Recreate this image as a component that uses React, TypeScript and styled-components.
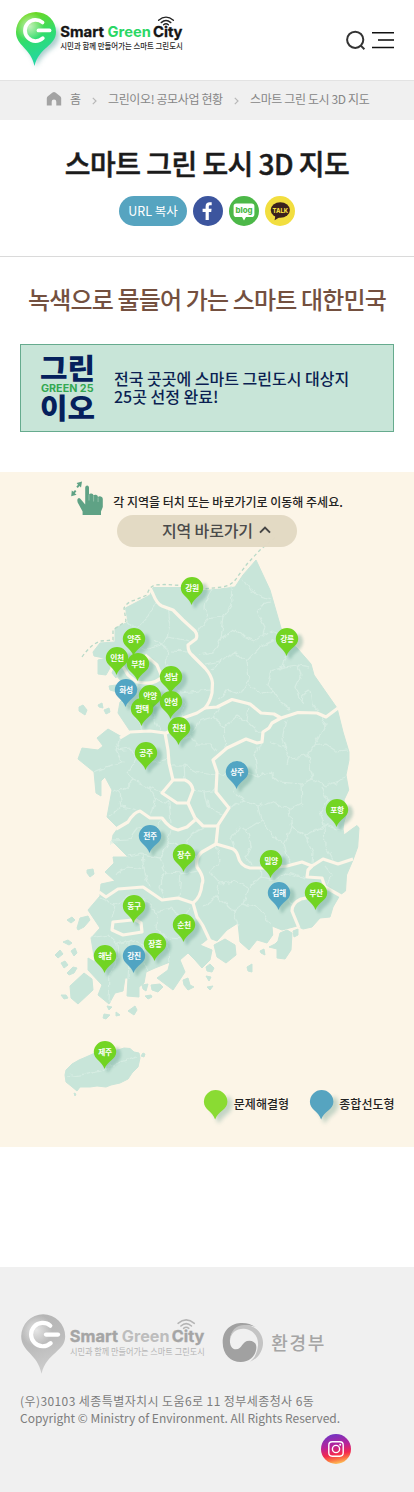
import React from 'react';
import styled, { createGlobalStyle } from 'styled-components';

const GlobalStyle = createGlobalStyle`
  * { box-sizing: border-box; }
  body { margin: 0; background: #fff; font-family: 'Noto Sans CJK KR', 'Noto Sans', sans-serif; color: #222; }
  button { font: inherit; border: 0; padding: 0; background: none; color: inherit; }
  h1, h2, p { margin: 0; }
  svg { display: block; overflow: visible; }
`;

const Page = styled.div`
  width: 414px;
  height: 1492px;
  display: flex;
  flex-direction: column;
  overflow: hidden;
`;

const Header = styled.header`
  height: 81px;
  flex: none;
  display: flex;
  align-items: flex-start;
  justify-content: space-between;
  padding: 9px 20px 0 14px;
  border-bottom: 1px solid #e3e3e3;
`;

const Tools = styled.div`
  display: flex;
  gap: 6px;
  padding-top: 21px;
`;

const Breadcrumb = styled.nav`
  height: 39px;
  flex: none;
  display: flex;
  align-items: center;
  padding: 0 0 4px 46px;
  background: #f0f0f0;
  color: #868686;
  font-size: 12px;
  line-height: 18px;
`;

const Crumb = styled.span<{ $w: number; $ls?: number }>`
  width: ${p => p.$w}px;
  letter-spacing: ${p => p.$ls ?? -0.38}px;
  white-space: nowrap;
`;

const Hero = styled.section`
  height: 137px;
  flex: none;
  display: flex;
  flex-direction: column;
  align-items: center;
  border-bottom: 1px solid #dadada;
`;

const Title = styled.h1`
  margin-top: 23px;
  height: 53px;
  font-size: 28px;
  font-weight: 500;
  line-height: 40px;
  letter-spacing: -0.55px;
  color: #1b1b1b;
  -webkit-text-stroke: 0.5px #1b1b1b;
  white-space: nowrap;
`;

const ShareRow = styled.div`
  display: flex;
  gap: 6px;
`;

const CopyButton = styled.button`
  width: 68px;
  height: 30px;
  border-radius: 15px;
  background: #56a4c0;
  color: #fff;
  font-size: 12.5px;
  line-height: 30px;
`;

const Intro = styled.section`
  height: 215px;
  flex: none;
  padding: 0 20px;
  display: flex;
  flex-direction: column;
`;

const Subtitle = styled.h2`
  margin-top: 24px;
  height: 63px;
  font-size: 24px;
  font-weight: 500;
  line-height: 36px;
  letter-spacing: -0.85px;
  text-align: center;
  color: #74503f;
  white-space: nowrap;
`;

const NoticeCard = styled.div`
  height: 88px;
  display: flex;
  align-items: center;
  gap: 18px;
  padding-left: 20px;
  border: 1px solid #66ab8e;
  background: #c8e5d8;
`;

const NoticeText = styled.p`
  padding-bottom: 2px;
  font-size: 16px;
  font-weight: 500;
  line-height: 18px;
  color: #0b1f52;
`;

const MapSection = styled.section`
  height: 675px;
  flex: none;
  display: flex;
  flex-direction: column;
  align-items: center;
  background: #fcf5e7;
`;

const Hint = styled.div`
  height: 43px;
  display: flex;
  align-items: flex-end;
  gap: 10px;
  font-size: 12px;
  font-weight: 500;
  line-height: 18px;
  color: #222;
  white-space: nowrap;
  span { padding-bottom: 4px; }
`;

const JumpButton = styled.button`
  position: relative;
  z-index: 2;
  width: 180px;
  height: 32px;
  flex: none;
  display: flex;
  align-items: center;
  gap: 6px;
  padding: 0 0 2px 45px;
  border-radius: 16px;
  background: rgba(226, 217, 195, 0.96);
  color: #4a4a4a;
  font-size: 16px;
  font-weight: 500;
  line-height: 30px;
  letter-spacing: -0.15px;
`;

const MapCanvas = styled.div`
  position: relative;
  width: 414px;
  height: 617px;
  margin-top: -17px;
`;

const Pin = styled.button`
  position: absolute;
  width: 36px;
  height: 40px;
`;

const Legend = styled.div`
  position: absolute;
  left: 202px;
  top: 558px;
  display: flex;
`;

const LegendItem = styled.div<{ $w: number }>`
  width: ${p => p.$w}px;
  display: flex;
  font-size: 12px;
  font-weight: 500;
  line-height: 31px;
  color: #222;
  white-space: nowrap;
  svg { flex: none; margin-right: -6px; }
`;

const Footer = styled.footer`
  margin-top: 120px;
  height: 225px;
  flex: none;
  background: #f0f0f0;
  padding: 44px 20px 0 19px;
`;

const FooterLogos = styled.div`
  display: flex;
  height: 81px;
  gap: 11.8px;
`;

const MinistrySlot = styled.div`
  padding-top: 9px;
`;

const FooterLine = styled.p<{ $ls: number }>`
  padding-left: 1px;
  font-size: 12px;
  line-height: 17px;
  letter-spacing: ${p => p.$ls}px;
  color: #7d7d7d;
  white-space: nowrap;
`;

const SocialRow = styled.div`
  display: flex;
  padding: 8px 0 0 302px;
`;

const FONT = "'Noto Sans CJK KR', sans-serif";
const LATIN = "Inter, 'Liberation Sans', sans-serif";

function Brand({ mono, scale = 1 }: { mono?: boolean; scale?: number }) {
  const id = mono ? 'mono' : 'color';
  const dark = mono ? '#a5a5a5' : '#151515';
  return (
    <svg width={172 * scale} height={64 * scale} viewBox="14 9 172 64">
      <defs>
        <linearGradient id={`pin-${id}`} x1="0.3" y1="0" x2="0.6" y2="1">
          <stop offset="0.05" stopColor={mono ? '#b5b5b5' : '#6cd922'} />
          <stop offset="0.5" stopColor={mono ? '#bcbcbc' : '#2fdc70'} />
          <stop offset="1" stopColor={mono ? '#cfcfcf' : '#1fd6ae'} />
        </linearGradient>
        <radialGradient id={`shine-${id}`} cx="0.34" cy="0.36" r="0.36">
          <stop offset="0" stopColor="#fff" stopOpacity="0.65" />
          <stop offset="1" stopColor="#fff" stopOpacity="0" />
        </radialGradient>
        <filter id={`soft-${id}`} x="-40%" y="-40%" width="200%" height="200%">
          <feGaussianBlur stdDeviation="2.4" />
        </filter>
      </defs>
      {!mono && (
        <path d="M23 45 Q35 56 36 67 Q40 56 55 46 Q61 40 59 30 L40 20 Z" fill="#5b9e9e" opacity="0.5" filter="url(#soft-color)" />
      )}
      <path d="M36 12 A20 20 0 0 1 56 32 C56 46 39 47 34.5 66 C31 48 16 46 16 32 A20 20 0 0 1 36 12Z" fill={`url(#pin-${id})`} />
      <circle cx="36" cy="32" r="20" fill={`url(#shine-${id})`} />
      <path d="M42.5 22.4 A10.6 10.6 0 1 0 42.8 38.2" fill="none" stroke="#fff" strokeWidth="3.8" strokeLinecap="round" />
      <path d="M38.5 30.4 H49.5" stroke="#fff" strokeWidth="3.8" strokeLinecap="round" />
      <g fontFamily={LATIN} fontWeight="700" fontSize="14.5">
        <text x="60.2" y="37.4" textLength="43.8" lengthAdjust="spacingAndGlyphs" fill={dark} stroke={dark} strokeWidth="0.3">Smart</text>
        <text x="107.5" y="37.4" textLength="43.3" lengthAdjust="spacingAndGlyphs" fill={mono ? '#bdbdbd' : '#2bd765'}>Green</text>
        <text x="153" y="37.4" textLength="29.5" lengthAdjust="spacingAndGlyphs" fill={dark} stroke={dark} strokeWidth="0.3">City</text>
      </g>
      <g fill="none" stroke={mono ? '#b5b5b5' : '#222'} strokeWidth="1.4" strokeLinecap="round">
        <path d="M158.6 20.2 Q166 14 173.4 20.2" />
        <path d="M161.2 22.6 Q166 18.4 170.8 22.6" />
        <path d="M163.6 24.8 Q166 22.8 168.4 24.8" />
      </g>
      <text x="60.3" y="49.4" fontFamily={FONT} fontWeight={mono ? 400 : 500} fontSize="8.4" textLength="122.5" lengthAdjust="spacingAndGlyphs" fill={mono ? '#b5b5b5' : '#2a2a2a'}>시민과 함께 만들어가는 스마트 그린도시</text>
    </svg>
  );
}

const SearchIcon = () => (
  <svg width="20" height="20" viewBox="0 0 20 20" fill="none" stroke="#333" strokeWidth="2">
    <circle cx="9.2" cy="9.8" r="8.1" />
    <path d="M14.8 15.6 L18.4 19.2" />
  </svg>
);

const MenuIcon = () => (
  <svg width="22" height="20" viewBox="0 0 22 20">
    <path d="M0 2.8H22M0 17.6H22" stroke="#111" strokeWidth="1.5" />
    <path d="M6 10H22" stroke="#444" strokeWidth="2" />
  </svg>
);

const HomeIcon = () => (
  <svg width="16" height="16" viewBox="0 0 16 16">
    <path d="M0.8 7.2 Q0.8 6 1.8 5.2 L6.6 1.5 Q8 0.6 9.4 1.5 L14.2 5.2 Q15.2 6 15.2 7.2 V14.6 H10.3 V10.8 A2.3 2.3 0 0 0 5.7 10.8 V14.6 H0.8Z" fill="#a3a3a3" />
  </svg>
);

const ChevronSlot = styled.span<{ $w: number }>`
  width: ${p => p.$w}px;
  padding-top: 4px;
`;

const Chevron = ({ w }: { w: number }) => (
  <ChevronSlot $w={w}>
    <svg width="5" height="8" viewBox="0 0 5 8" fill="none" stroke="#b8b8b8" strokeWidth="1.2">
      <path d="M0.8 0.8 L4 4 L0.8 7.2" />
    </svg>
  </ChevronSlot>
);

const Facebook = () => (
  <svg width="30" height="30" viewBox="0 0 30 30">
    <circle cx="15" cy="15" r="15" fill="#3c559e" />
    <path d="M12.6 24 V16 H9.6 V12.8 H12.6 V10.4 C12.6 7.6 14.2 6.2 16.7 6.2 L18.7 6.3 V9.2 H17.2 C16.1 9.2 15.8 9.7 15.8 10.7 V12.8 H18.6 L18.2 16 H15.8 V24Z" fill="#fff" />
  </svg>
);

const Blog = () => (
  <svg width="30" height="30" viewBox="0 0 30 30">
    <circle cx="15" cy="15" r="15" fill="#4cb848" />
    <path d="M7.4 7.4 H22.6 Q25.4 7.4 25.4 10.2 V18.2 Q25.4 21 22.6 21 H17 L15 24.4 L13 21 H7.4 Q4.6 21 4.6 18.2 V10.2 Q4.6 7.4 7.4 7.4Z" fill="#fff" />
    <text x="6.6" y="16.8" fontFamily={LATIN} fontWeight="800" fontSize="7.4" textLength="17" lengthAdjust="spacingAndGlyphs" fill="#4cb848">blog</text>
  </svg>
);

const Kakao = () => (
  <svg width="30" height="30" viewBox="0 0 30 30">
    <circle cx="15" cy="15" r="15" fill="#f2de3f" />
    <ellipse cx="15.3" cy="14" rx="9.6" ry="7.8" fill="#3a211e" />
    <path d="M10.5 19 L9.6 24.2 L15 21Z" fill="#3a211e" />
    <text x="7.6" y="16.8" fontFamily={LATIN} fontWeight="800" fontSize="6.8" textLength="15.4" lengthAdjust="spacingAndGlyphs" fill="#f2de3f">TALK</text>
  </svg>
);

const GreenLogo = () => (
  <svg width="55" height="68" viewBox="0 0 55 68">
    <g fontFamily={FONT} fontWeight="900" fill="#05205c">
      <text x="-1" y="24.6" fontSize="28.5" textLength="55" lengthAdjust="spacingAndGlyphs">그린</text>
      <text x="-1" y="64.8" fontSize="28.5" textLength="55" lengthAdjust="spacingAndGlyphs">이오</text>
    </g>
    <text x="0" y="37.6" fontFamily={LATIN} fontWeight="700" fontSize="10" textLength="52.5" lengthAdjust="spacingAndGlyphs" fill="#33a852">GREEN 25</text>
  </svg>
);

const HandIcon = () => (
  <svg width="32" height="34" viewBox="0 0 32 34" fill="#5fa285">
    <path d="M11.6 34 V30.5 L6.7 21.4 Q5.8 18.6 7 17.4 Q8.6 16.4 10.2 18.8 L14.2 23.6 V6.4 Q14.4 4.6 16.2 4.6 Q17.8 4.6 18 6.4 V13.6 Q18.8 12.2 20.4 12.4 Q22.2 12.6 22.6 14.4 Q23.4 13.4 25 13.8 Q26.8 14.2 27 16 Q28 15 29.8 15.4 Q31.6 15.8 31.8 17.8 V26 L30 30.6 V34Z" />
    <path d="M22.6 14.8V20.5M27.1 16.4V21M18 13.6V19.5" stroke="#a6cfb9" strokeWidth="0.7" />
    <path d="M5.6 2 L11 0.6 L10 6.4 L8.5 5 L6.8 7 L5.3 5.8 L7 3.7Z" />
    <path d="M0.8 9.4 L2.4 10.8 L4 9 L5.4 10.2 L3.8 12.2 L5.6 13.8 L0.2 15.2Z" />
  </svg>
);

const MinistryLogo = () => (
  <MinistrySlot>
    <svg width="104" height="44" viewBox="220 1320 104 44">
      <g transform="translate(222.7 1322.7) scale(0.3333)">
        <path d="M98 13 C70 -9 0 -6 0 60 C0 96 26 118 54 118 C84 118 101 96 101 74 C101 62 93 54 80 54 C58 54 58 80 40 80 C27 80 20 66 22 48 C26 22 58 -2 98 13Z" fill="#a1a1a1" />
        <path d="M23 56 C22 30 42 17 64 18 C92 20 108 42 106 68 C104 92 94 108 82 117 C106 108 121 84 121 60 C121 32 98 7 66 7 C38 7 20 28 23 56Z" fill="#c4c4c4" />
      </g>
      <text x="271.3" y="1349.6" fontFamily={FONT} fontWeight="500" fontSize="18" textLength="53" lengthAdjust="spacing" fill="#a5a5a5">환경부</text>
    </svg>
  </MinistrySlot>
);

const Instagram = () => (
  <svg width="30" height="30" viewBox="0 0 30 30">
    <defs>
      <linearGradient id="insta" x1="0.35" y1="0" x2="0.55" y2="1">
        <stop offset="0" stopColor="#7036c4" />
        <stop offset="0.4" stopColor="#b82299" />
        <stop offset="0.68" stopColor="#f3284e" />
        <stop offset="0.85" stopColor="#fb7440" />
        <stop offset="1" stopColor="#fdc45a" />
      </linearGradient>
    </defs>
    <circle cx="15" cy="15" r="15" fill="url(#insta)" />
    <g fill="none" stroke="#fff" strokeWidth="1.4">
      <rect x="7.8" y="7.8" width="14.4" height="14.4" rx="3.4" />
      <circle cx="15" cy="15" r="3.6" />
    </g>
    <circle cx="19.2" cy="10.8" r="1" fill="#fff" />
  </svg>
);

const GREEN = '#6fd41d';
const BLUE = '#4da2c2';

const PinShape = ({ color, label, size = 1, opacity = 1 }: { color: string; label?: string; size?: number; opacity?: number }) => (
  <svg width={36 * size} height={40 * size} viewBox="0 0 36 40">
    <path d="M15 33 C13 25 8 22 8 16 L26 8 Q31 14 28 20 C25 26 19 27 17 33Z" fill="#4f9080" opacity="0.32" filter="url(#pin-blur)" />
    <path d="M13 2 A11.2 11.2 0 0 1 24.2 13 C24.2 20.5 15.2 22 12.5 30 C10 22 1.8 20.5 1.8 13 A11.2 11.2 0 0 1 13 2Z" fill={color} opacity={opacity} />
    {label && (
      <text x="13" y="15.9" textAnchor="middle" fontFamily={FONT} fontWeight="700" fontSize="7.7" letterSpacing="-0.3" fill="#fff">{label}</text>
    )}
  </svg>
);

const pins: [string, number, number, boolean?][] = [
  ['강원', 192, 588], ['양주', 134, 639], ['인천', 117, 658], ['부천', 138, 664],
  ['성남', 171, 677], ['화성', 125.5, 690, true], ['안양', 150, 696], ['안성', 171, 702],
  ['평택', 142, 709], ['진천', 179, 728], ['공주', 146, 753], ['강릉', 287, 639],
  ['상주', 237, 772, true], ['포항', 336.7, 810], ['밀양', 270.7, 861], ['김해', 279, 893, true],
  ['부산', 316, 893], ['전주', 150, 836, true], ['장수', 183.5, 855], ['동구', 134, 906],
  ['순천', 183.5, 925], ['장흥', 154.5, 944], ['해남', 105, 956], ['강진', 134, 956, true],
  ['제주', 105, 1052],
];

const mainland =
  'M256 560 L270 590 L281 628 L288 641 L297 648 L311 664 L314 675 L337 708 L343 732 L349 752 L349 760 L346 775 L348.7 790 L344 800 L347 812 L344 822 L343 829 L344 835 L352 829 L357 825.5 L359 828 L357.7 847 L353 860 L346.5 875 L345.5 891 L340 895 L333 907 L330 917 L320 918 L312 927 L303 929 L297 926 L282 930 L272 926 L272.7 935 L267 943 L257 940 L249 950 L240 942 L238 923 L227 930 L217 941 L209 938 L204 942 L200 945 L212 950 L210 960 L202 968 L195 960 L188 953 L180 960 L185 972 L173 990 L157 978 L168 970 L170 962 L155 968 L146 972 L144 983 L139 987 L139 997 L127 996 L128 978 L125 978 L123 991 L115 993 L109 1004 L98 995 L102 985 L88 970 L88 958 L95 962 L93 950 L91 938 L100 928 L88 910 L100 896 L100 893 L101 884 L115 881 L105 872 L114 863 L113 857 L128 857 L112 841 L113 835 L118 828 L107 817 L112 790 L105 777 L101 781 L101 796 L96 793 L94 772 L78 759 L82 748 L98 750 L103 746 L97 738 L108 729 L122 737 L130 731 L118 713 L120 702 L128 694 L118 690 L122 682 L115 674 L112 663 L104 658 L94 656 L93 652 L100 643 L115 642 L115 628 L128 622 L125.5 608 L137 602 L150 595 L153 587.5 L180 587.5 L200 591 L220 589 L235 587 L243 575Z';

const provinces = [
  'M150 588 L153 594 Q157 604 162 606 L173 610 L183 620 L195 631 Q198 635 196 639 L188 645 Q188 652 192 655 L205 668 Q212 676 212.5 683 L212 693 Q210 702 205 708 L217 707 L232 699.5 L250 704 L261 713 L274 714 L281 718 L298 712.5 L317 713 L326 717 L338 708',
  'M281 718 L272 723 L269 728 L263 732 L262 742 L257 743 L246 739 L227 748 L213 760 L217 772 L216 792 L229 808 L218 825 L216 844',
  'M205 708 L197 713 L183 718 L173 727 Q169 733 165 733 L150 731 L130 732 L120 738',
  'M165 733 L168 750 L169 763 L173 780',
  'M173 780 L185 780 Q192 783 193 790 L188 803 L177 803 L162 793 Z',
  'M188 803 L195 818 L203 826 L218 826',
  'M116 829 L128 822 Q134 812 140 811 L150 818 L162 818 Q170 829 178 830 L187 827 L195 820',
  'M353 859 L338 864 L323 859 L312 866 L302 862 L287 866 L265 868 L250 868 Q240 866 238 856 Q236 849 230 848 L216 844 L202 852 Q195 858 197 867 Q205 878 202 884 Q201 897 193 903 L178 898 L162 900 L143 887 L118 889 L106 897 L99 892',
  'M193 903 L197 917 L203 926 L211 943',
  'M312 866 L308 870 L307 877 L322 878 L325 887 L341 896',
  'M323 884 Q314 898 301 899 Q292 903 292 911 L299 928',
  'M145 655 L157 665 L162 677 Q155 684 145 683 L137 682 L128 675 L122 665',
  'M132 920 L113 922 L112 930 L123 935 L142 932 L141 923 L134 919',
];

const districts = [
  'M231 587 L232 603 L223 617 L220 640 L236 628 L245 637 L255 641 L272 631 L280 634',
  'M243 578 L252 592 L262 597 L270 600', 'M270 603 L261 605 L258 614 L265 627 L263 636',
  'M212 590 L204 607 L208 620 L198 631', 'M222 617 L207 619', 'M220 640 L213 652 L199 655',
  'M220 660 L236 653 L246 662 L248 680 L240 695 L226 690 L219 700', 'M246 662 L260 647 L274 640',
  'M248 684 L262 695 L273 690', 'M287 655 L283 667 L272 671 L268 685 L280 702 L291 711',
  'M283 667 L298 665 L310 667', 'M298 665 L301 676 L296 687 L303 705', 'M303 705 L304 692 L310 690 L312 704 L318 711',
  'M212 670 L222 660', 'M155 640 L168 650 L166 665 L174 672', 'M128 622 L137 629 L134 643 L145 650 L159 645 L169 636 L189 641',
  'M156 603 L148 616 L137 628', 'M168 609 L171 626 L168 637', 'M171 651 L188 652', 'M162 678 L173 684 L182 693 L200 691 L211 690',
  'M136 683 L140 700 L135 715 L143 730', 'M155 685 L158 701 L152 714 L160 730', 'M120 702 L135 706 L155 705', 'M177 692 L184 704 L182 718',
  'M178 742 L190 735 L196 745 L212 745 L217 751', 'M193 735 L199 722 L213 718 L220 705', 'M213 718 L224 727 L237 716 L247 722 L262 735', 'M247 722 L249 704',
  'M224 727 L226 748', 'M170 765 L184 765 L200 773 L216 775', 'M184 765 L185 780', 'M193 790 L205 792 L216 790', 'M205 792 L209 808 L224 815',
  'M120 737 L116 750 L123 762 L109 766 L94 772', 'M116 750 L130 748 L137 758 L127 773 L133 780 L120 792 L112 790', 'M137 758 L153 762 L168 758',
  'M133 780 L149 787 L155 799 L150 817', 'M120 792 L122 807 L110 816', 'M122 807 L137 811', 'M149 787 L163 792', 'M155 799 L169 803 L171 821',
  'M112 841 L128 840 L138 827 L153 833 L162 820', 'M128 857 L142 854 L160 858 L168 843 L183 848 L197 858', 'M142 854 L144 869 L149 887', 'M144 869 L128 867 L115 875',
  'M160 858 L166 872 L160 886 L164 899', 'M166 872 L181 873 L199 870', 'M181 873 L179 897', 'M168 843 L171 829', 'M183 848 L190 835 L204 827',
  'M100 898 L115 905 L112 918', 'M115 905 L128 896 L144 900 L157 912 L170 908 L182 918 L190 907', 'M157 912 L156 928 L167 937 L183 938 L196 926',
  'M91 938 L108 935 L117 944 L130 940 L144 946 L155 939', 'M117 944 L118 957 L110 973 L109 1002', 'M130 940 L130 960 L129 978', 'M144 946 L146 970', 'M167 937 L170 962',
  'M216 772 L232 777 L245 771 L258 778 L269 772 L280 782 L301 784 L313 779 L325 786 L346 778',
  'M286 721 L282 739 L289 758 L287 765', 'M289 758 L308 756 L313 746 L325 744 L336 751 L348 750', 'M308 756 L313 779',
  'M262 740 L255 755 L258 778', 'M229 808 L244 801 L258 807 L272 801 L289 810 L302 803 L301 784',
  'M258 807 L261 820 L247 829 L240 826 L231 838 L235 850', 'M289 810 L292 828 L284 845 L290 864', 'M292 828 L305 836 L324 825 L344 831',
  'M305 836 L313 852 L312 865', 'M321 786 L327 801 L320 812 L324 825', 'M261 820 L272 834 L284 845', 'M247 829 L251 846 L245 858 L253 867', 'M324 825 L325 845 L334 862',
  'M216 845 L220 861 L210 872 L220 883 L217 897 L203 907', 'M220 883 L235 881 L248 888 L243 903 L233 911 L238 924', 'M243 903 L261 909 L270 924',
  'M248 888 L261 878 L275 881 L287 873 L306 878', 'M261 878 L260 868', 'M275 881 L281 896 L292 905', 'M217 897 L226 905 L233 911', 'M325 866 L332 875 L325 887',
  'M220 661 L204 664', 'M320 714 L325 725 L318 739 L313 746', 'M286 748 L270 742', 'M238 777 L234 792 L244 801',
];

const islands = [
  'M98 660 L107 658 L110 668 L106 675 L98 674Z', 'M114 668 L117 671 L116 678 L112 673Z', 'M79 707 L83 705 L87 710 L85 715 L79 711Z',
  'M98 705 L102 703 L103 708 L99 707Z', 'M104 710 L109 708 L110 712 L106 714Z', 'M109 686 L116 685 L117 692 L110 690Z',
  'M87 870 L93 869 L94 874 L90 877 L87 873Z', 'M67 920 L72 917 L75 920 L71 923Z', 'M77 928 L80 918 L88 916 L90 920 L84 927 L78 930Z',
  'M63 942 L68 940 L72 943 L69 945Z', 'M55 955 L60 950 L63 954 L58 958Z', 'M71 951 L75 948 L77 953 L74 956Z', 'M61 963 L65 961 L68 965 L64 968Z',
  'M67 973 L73 967 L77 968 L74 973 L69 975Z', 'M70 986 L84 973 L92 979 L93 990 L78 1004 L71 998Z', 'M61 995 L66 995 L68 998 L64 999Z',
  'M107 1006 L112 1007 L109 1010Z', 'M104 1014 L110 1015 L106 1019 L103 1018Z', 'M116 1012 L120 1015 L116 1016Z', 'M128 1011 L135 1006 L137 1010 L134 1015Z',
  'M142 985 L148 984 L146 991 L143 989Z', 'M151 985 L160 984 L163 987 L158 992 L152 990Z', 'M145 996 L151 995 L152 997 L148 999Z',
  'M183 980 L188 978 L190 985 L194 987 L188 990 L184 985Z', 'M206 967 L210 964 L214 968 L212 972 L207 971Z', 'M206 976 L211 977 L209 981Z', 'M207 987 L213 986 L210 990Z',
  'M214 945 L225 939 L235 945 L236 955 L226 963 L217 957Z', 'M269 947 L275 944 L278 941 L280 933 L287 930 L292 933 L291 950 L285 959 L277 958 L277 949Z',
  'M260 951 L264 949 L265 955 L261 953Z', 'M293 931 L298 929 L298 935 L294 937Z', 'M247 967 L252 964 L252 972 L248 971Z', 'M143 1053 L145 1054 L144 1057 L141 1056Z',
  'M74 1093 L76 1094 L75 1096Z',
  'M65 1075 L66 1070 L72 1064 L79 1060 L86 1057 L95 1053 L105 1050 L118 1050 L124 1048 L130 1048.5 L134 1052 L139 1053 L140 1058 L138 1067 L132 1073 L128 1079 L120 1083 L111 1085 L106 1087 L97 1086 L90 1087 L80 1087 L77 1091 L71 1086 L66 1082Z',
];

const KoreaMap = () => (
  <svg width="414" height="617" viewBox="0 530 414 617">
    <defs>
      <filter id="pin-blur" x="-50%" y="-50%" width="200%" height="200%">
        <feGaussianBlur stdDeviation="1.8" />
      </filter>
      <filter id="wiggle" x="0" y="0" width="100%" height="100%">
        <feTurbulence type="fractalNoise" baseFrequency="0.12" numOctaves="2" seed="4" />
        <feDisplacementMap in="SourceGraphic" scale="7" xChannelSelector="R" yChannelSelector="G" />
      </filter>
    </defs>
    <g fill="#c8e5d9" stroke="#c8e5d9" strokeWidth="1" strokeLinejoin="round">
      <path d={mainland} />
      {islands.map(d => <path key={d} d={d} />)}
    </g>
    <g fill="none" stroke="#d7ede3" strokeWidth="1.1" filter="url(#wiggle)">
      {districts.map(d => <path key={d} d={d} />)}
      <path d="M67 1077 L85 1074 L101 1070 L118 1063 L137 1057" />
    </g>
    <g fill="none" stroke="#fcf5e7" strokeWidth="3.2" strokeLinejoin="round">
      {provinces.map(d => <path key={d} d={d} />)}
    </g>
    <path
      d="M82 657 Q91 644 101 641 L113 640 V630 L126 621 L124 608 Q127 602 135 600 L147 595 Q149 587 155 585 L165 584.5 L183 585.5 L203 589 L223 587 Q233 585 238 576 L247 564 L260 550 L277 536"
      fill="none" stroke="#b8d9c8" strokeWidth="1.3" strokeDasharray="3.4 2.8"
    />
  </svg>
);

export default function App() {
  return (
    <Page>
      <GlobalStyle />
      <Header>
        <Brand />
        <Tools>
          <SearchIcon />
          <MenuIcon />
        </Tools>
      </Header>
      <Breadcrumb>
        <Crumb $w={24}><HomeIcon /></Crumb>
        <Crumb $w={22}>홈</Crumb>
        <Chevron w={16} />
        <Crumb $w={126}>그린이오! 공모사업 현황</Crumb>
        <Chevron w={16} />
        <Crumb $w={124}>스마트 그린 도시 3D 지도</Crumb>
      </Breadcrumb>
      <Hero>
        <Title>스마트 그린 도시 3D 지도</Title>
        <ShareRow>
          <CopyButton>URL 복사</CopyButton>
          <Facebook />
          <Blog />
          <Kakao />
        </ShareRow>
      </Hero>
      <Intro>
        <Subtitle>녹색으로 물들어 가는 스마트 대한민국</Subtitle>
        <NoticeCard>
          <GreenLogo />
          <NoticeText>전국 곳곳에 스마트 그린도시 대상지<br />25곳 선정 완료!</NoticeText>
        </NoticeCard>
      </Intro>
      <MapSection>
        <Hint>
          <HandIcon />
          <span>각 지역을 터치 또는 바로가기로 이동해 주세요.</span>
        </Hint>
        <JumpButton>
          지역 바로가기
          <svg width="12" height="8" viewBox="0 0 12 8" fill="none" stroke="#444" strokeWidth="2">
            <path d="M1 6.6 L6 1.6 L11 6.6" />
          </svg>
        </JumpButton>
        <MapCanvas>
          <KoreaMap />
          {pins.map(([label, x, y, blue]) => (
            <Pin key={label} style={{ left: x - 13, top: y - 543 }}>
              <PinShape color={blue ? BLUE : GREEN} label={label} opacity={0.97} />
            </Pin>
          ))}
          <Legend>
            <LegendItem $w={105.5}>
              <PinShape color="#8adb33" size={1.05} />
              문제해결형
            </LegendItem>
            <LegendItem $w={90}>
              <PinShape color="#56a4c0" size={1.05} />
              종합선도형
            </LegendItem>
          </Legend>
        </MapCanvas>
      </MapSection>
      <Footer>
        <FooterLogos>
          <Brand mono scale={1.1} />
          <MinistryLogo />
        </FooterLogos>
        <FooterLine $ls={0.41}>(우)30103 세종특별자치시 도움6로 11 정부세종청사 6동</FooterLine>
        <FooterLine $ls={0}>Copyright © Ministry of Environment. All Rights Reserved.</FooterLine>
        <SocialRow><Instagram /></SocialRow>
      </Footer>
    </Page>
  );
}
